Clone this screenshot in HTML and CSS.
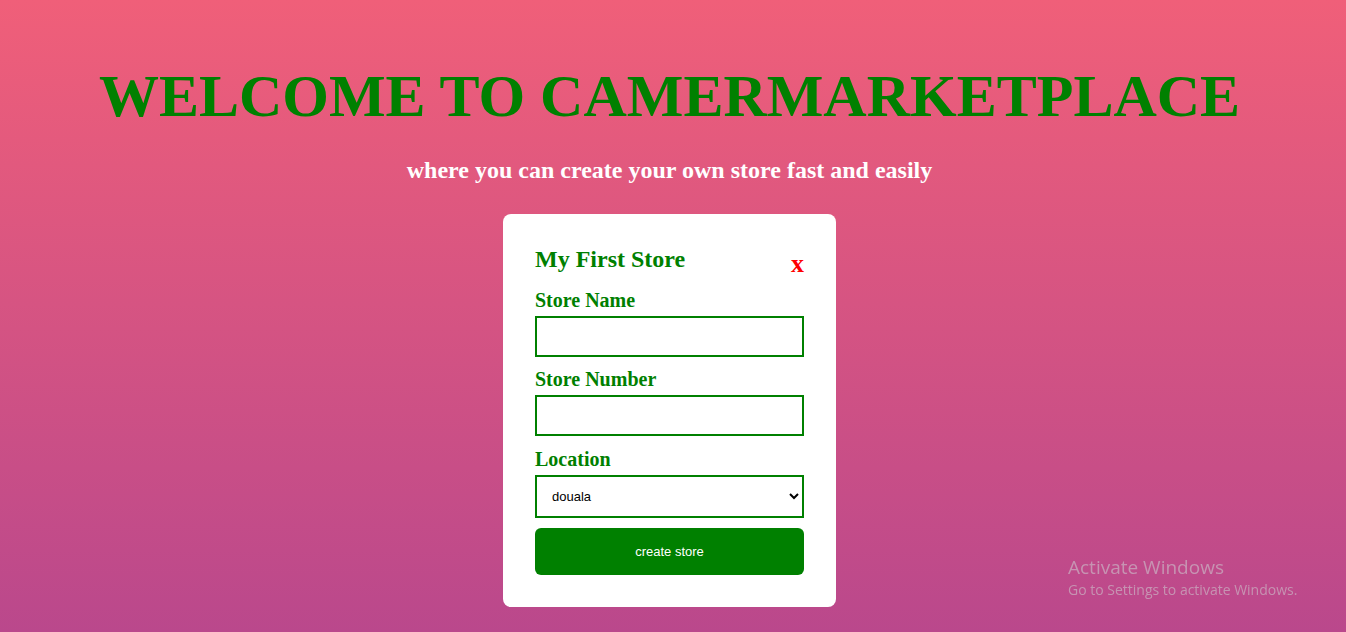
FILE: index.html
```html
<!DOCTYPE html>
<html lang="en">
<head>
<meta charset="utf-8">
<title>CamerMarketplace</title>
<link rel="stylesheet" href="styles.css">
</head>
<body>
<main class="page">
  <h1 class="title">WELCOME TO CAMERMARKETPLACE</h1>
  <p class="subtitle">where you can create your own store fast and easily</p>
  <form class="card">
    <div class="card-head">
      <h2 class="card-title">My First Store</h2>
      <span class="close">x</span>
    </div>
    <label class="label label-first" for="name">Store Name</label>
    <input class="field" id="name" type="text">
    <label class="label" for="number">Store Number</label>
    <input class="field" id="number" type="text">
    <label class="label label-loc" for="loc">Location</label>
    <select class="field select" id="loc">
      <option>douala</option>
      <option>yaounde</option>
    </select>
    <button class="btn" type="button">create store</button>
  </form>
</main>
<div class="watermark">
  <div class="wm-title">Activate Windows</div>
  <div class="wm-sub">Go to Settings to activate Windows.</div>
</div>
</body>
</html>
```
FILE: styles.css
```css
html, body {
  margin: 0;
  height: 100%;
}
body {
  background: linear-gradient(to bottom, #f05f79 0%, #ba488c 100%);
  font-family: "Liberation Serif", "Times New Roman", serif;
  overflow: hidden;
}
.page {
  display: flex;
  flex-direction: column;
  align-items: center;
  padding-right: 7px;
}
.title {
  margin: 61px 0 0;
  font-size: 60px;
  font-weight: bold;
  color: #008000;
  line-height: 70px;
}
.subtitle {
  margin: 25px 0 0;
  font-size: 24px;
  font-weight: bold;
  color: #ffffff;
  line-height: 28px;
}
.card {
  margin-top: 30px;
  width: 333px;
  box-sizing: border-box;
  background: #ffffff;
  border-radius: 8px;
  padding: 30px 32px 32px;
  display: flex;
  flex-direction: column;
}
.card-head {
  display: flex;
  justify-content: space-between;
  align-items: flex-end;
}
.card-title {
  margin: 0;
  font-size: 24px;
  line-height: 30px;
  color: #008000;
}
.close {
  font-size: 26px;
  font-weight: bold;
  color: #ff0000;
  line-height: 26px;
  margin-bottom: -3px;
}
.label {
  margin-top: 10px;
  font-size: 20px;
  font-weight: bold;
  color: #008000;
  line-height: 24px;
}
.label-first {
  margin-top: 14px;
}
.label-loc {
  margin-top: 11px;
}
.field {
  margin-top: 4px;
  height: 41px;
  box-sizing: border-box;
  border: 2px solid #008000;
  background: #ffffff;
  padding: 0 11px;
  font-family: "Liberation Sans", Arial, sans-serif;
  font-size: 13px;
  outline: none;
  border-radius: 0;
}
.select {
  height: 43px;
  margin-top: 4px;
  color: #000000;
}
.btn {
  margin-top: 10px;
  height: 47px;
  border: none;
  border-radius: 6px;
  background: #008000;
  color: #ffffff;
  font-family: "Liberation Sans", Arial, sans-serif;
  font-size: 13px;
}
.watermark {
  position: fixed;
  left: 1068px;
  top: 555px;
  color: rgba(200, 160, 185, 0.85);
  font-family: "Open Sans", "Noto Sans", sans-serif;
}
.wm-title {
  font-size: 19px;
  line-height: 24px;
}
.wm-sub {
  font-size: 14px;
  line-height: 21px;
}
```
